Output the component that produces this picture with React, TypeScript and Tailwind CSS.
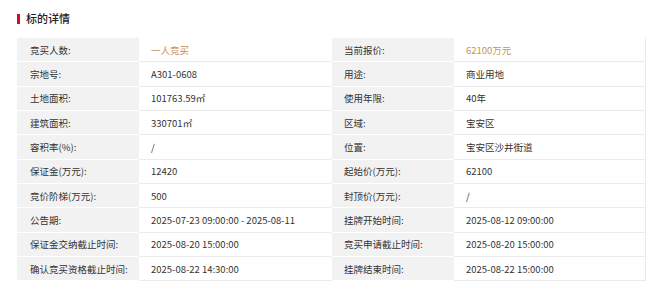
import React from 'react';

interface Row {
    label: string;
    value: string;
    accent?: boolean;
    label2: string;
    value2: string;
    accent2?: boolean;
}

const rows: Row[] = [
    { label: '竞买人数:', value: '一人竞买', accent: true, label2: '当前报价:', value2: '62100万元', accent2: true },
    { label: '宗地号:', value: 'A301-0608', label2: '用途:', value2: '商业用地' },
    { label: '土地面积:', value: '101763.59㎡', label2: '使用年限:', value2: '40年' },
    { label: '建筑面积:', value: '330701㎡', label2: '区域:', value2: '宝安区' },
    { label: '容积率(%):', value: '/', label2: '位置:', value2: '宝安区沙井街道' },
    { label: '保证金(万元):', value: '12420', label2: '起始价(万元):', value2: '62100' },
    { label: '竞价阶梯(万元):', value: '500', label2: '封顶价(万元):', value2: '/' },
    { label: '公告期:', value: '2025-07-23 09:00:00 - 2025-08-11', label2: '挂牌开始时间:', value2: '2025-08-12 09:00:00' },
    { label: '保证金交纳截止时间:', value: '2025-08-20 15:00:00', label2: '竞买申请截止时间:', value2: '2025-08-20 15:00:00' },
    { label: '确认竞买资格截止时间:', value: '2025-08-22 14:30:00', label2: '挂牌结束时间:', value2: '2025-08-22 15:00:00' },
];

const labelCell = "w-[122px] shrink-0 bg-[#f2f2f2] border-b border-white flex items-center whitespace-nowrap";
const valueCell = "shrink-0 border-b border-[#ebebeb] pl-[12px] flex items-center whitespace-nowrap";

export default function App() {
    return (
        <div className="w-[660px] h-[293px] bg-white pl-[17px] pt-[13px] text-[9.5px] text-[#333] font-['Noto_Sans_CJK_SC','Microsoft_YaHei',sans-serif]">
            <h3 className="flex items-center gap-[6px] h-[11px] text-[11px] font-medium text-[#222] leading-none">
                <span className="w-[3px] h-[10px] bg-[#c8102e]" />
                标的详情
            </h3>

            {/* details table */}
            <div className="mt-[14px] w-[629px] border-r border-[#ebebeb]">
                {rows.map((r) => (
                    <div key={r.label} className="flex h-[24.35px]">
                        <div className={`${labelCell} pl-[13px]`}>{r.label}</div>
                        <div className={`${valueCell} w-[193px] ${r.accent ? 'text-[#c8915e]' : ''}`}>{r.value}</div>
                        <div className={`${labelCell} pl-[12px]`}>{r.label2}</div>
                        <div className={`${valueCell} w-[192px] ${r.accent2 ? 'text-[#c8915e]' : ''}`}>{r.value2}</div>
                    </div>
                ))}
            </div>
        </div>
    );
}
